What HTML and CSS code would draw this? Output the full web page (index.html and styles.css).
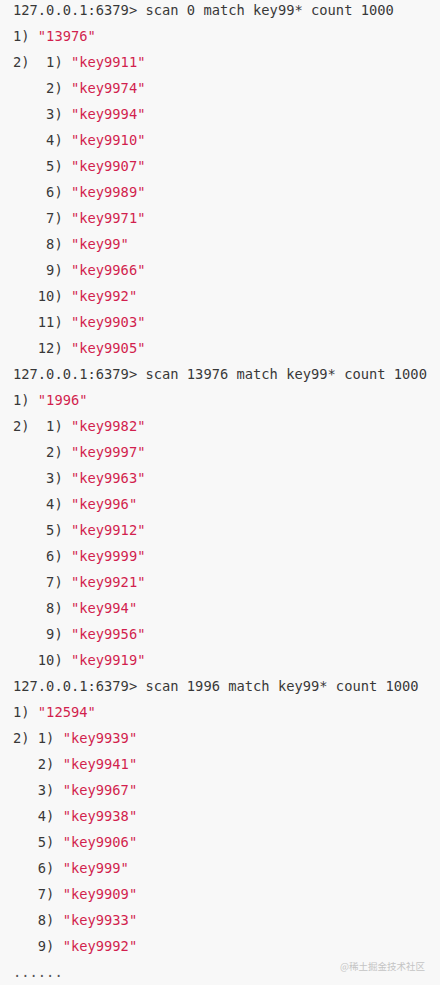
FILE: index.html
```html
<!DOCTYPE html>
<html lang="zh">
<head>
<meta charset="utf-8">
<link rel="stylesheet" href="styles.css">
</head>
<body>
<div class="code-block">
<pre class="code"><code>127.0.0.1:6379&gt; scan 0 match key99* count 1000
1) <span class="str">"13976"</span>
2)  1) <span class="str">"key9911"</span>
    2) <span class="str">"key9974"</span>
    3) <span class="str">"key9994"</span>
    4) <span class="str">"key9910"</span>
    5) <span class="str">"key9907"</span>
    6) <span class="str">"key9989"</span>
    7) <span class="str">"key9971"</span>
    8) <span class="str">"key99"</span>
    9) <span class="str">"key9966"</span>
   10) <span class="str">"key992"</span>
   11) <span class="str">"key9903"</span>
   12) <span class="str">"key9905"</span>
127.0.0.1:6379&gt; scan 13976 match key99* count 1000
1) <span class="str">"1996"</span>
2)  1) <span class="str">"key9982"</span>
    2) <span class="str">"key9997"</span>
    3) <span class="str">"key9963"</span>
    4) <span class="str">"key996"</span>
    5) <span class="str">"key9912"</span>
    6) <span class="str">"key9999"</span>
    7) <span class="str">"key9921"</span>
    8) <span class="str">"key994"</span>
    9) <span class="str">"key9956"</span>
   10) <span class="str">"key9919"</span>
127.0.0.1:6379&gt; scan 1996 match key99* count 1000
1) <span class="str">"12594"</span>
2) 1) <span class="str">"key9939"</span>
   2) <span class="str">"key9941"</span>
   3) <span class="str">"key9967"</span>
   4) <span class="str">"key9938"</span>
   5) <span class="str">"key9906"</span>
   6) <span class="str">"key999"</span>
   7) <span class="str">"key9909"</span>
   8) <span class="str">"key9933"</span>
   9) <span class="str">"key9992"</span>
<span class="dots">......</span></code></pre>
<span class="watermark">@稀土掘金技术社区</span>
</div>
</body>
</html>
```
FILE: styles.css
```css
html, body {
  margin: 0;
  padding: 0;
  background: #f8f8f8;
}
.code-block {
  position: relative;
  height: 985px;
  overflow: hidden;
  background: #f8f8f8;
}
.code {
  margin: -3px 0 0 0;
  padding: 0 0 0 13px;
  font-family: "DejaVu Sans Mono", "Liberation Mono", monospace;
  font-size: 13.75px;
  line-height: 26px;
  color: #383838;
  white-space: pre;
}
.str {
  color: #d21f4e;
}
.dots {
  color: #555;
}
.watermark {
  position: absolute;
  right: 15px;
  bottom: 12px;
  font-family: "Noto Sans CJK SC", "Noto Sans", sans-serif;
  font-size: 9.5px;
  line-height: 14px;
  color: #c4c4c4;
}
```
